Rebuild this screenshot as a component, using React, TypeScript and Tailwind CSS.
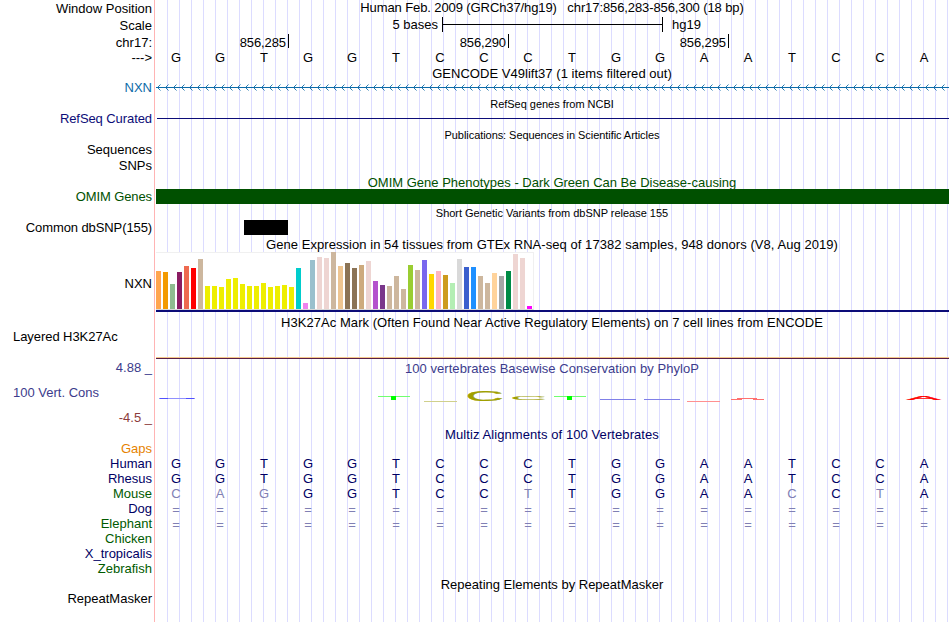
import React from 'react';

const sequence = 'GGTGGTCCCTGGAATCCA';

const alignments = [
  { name: 'Human', bases: 'GGTGGTCCCTGGAATCCA', color: 'text-[#000064]' },
  { name: 'Rhesus', bases: 'GGTGGTCCCTGGAATCCA', color: 'text-[#000064]' },
  { name: 'Mouse', bases: 'CAGGGTCCTTGGAACCTA', color: 'text-[#005a00]' },
  { name: 'Dog', bases: '==================', color: 'text-[#000064]' },
  { name: 'Elephant', bases: '==================', color: 'text-[#005a00]' },
  { name: 'Chicken', bases: '', color: 'text-[#005a00]' },
  { name: 'X_tropicalis', bases: '', color: 'text-[#000064]' },
  { name: 'Zebrafish', bases: '', color: 'text-[#005a00]' },
];

// [bar height, tissue color]
const tissues: [number, string][] = [
  [38, '#ffa54f'], [37, '#f39a00'], [25, '#8fbc8f'], [37, '#8b1c62'], [43, '#ee6a50'], [41, '#ff0000'],
  [50, '#cdb79e'], [23, '#eeee00'], [23, '#eeee00'], [22, '#eeee00'], [30, '#eeee00'], [31, '#eeee00'],
  [25, '#eeee00'], [23, '#eeee00'], [23, '#eeee00'], [26, '#eeee00'], [22, '#eeee00'], [23, '#eeee00'],
  [24, '#eeee00'], [22, '#eeee00'], [41, '#00cdcd'], [6, '#ee82ee'], [49, '#9ac0cd'], [52, '#eed5d2'],
  [51, '#eed5d2'], [57, '#cdb79e'], [43, '#eec591'], [46, '#8b7355'], [41, '#8b7355'], [44, '#cdaa7d'],
  [48, '#eed5d2'], [28, '#b452cd'], [24, '#7a378b'], [23, '#cdb79e'], [33, '#cdb79e'], [20, '#cdb79e'],
  [44, '#9acd32'], [39, '#cdb79e'], [49, '#7a67ee'], [35, '#ffd700'], [38, '#ffb6c1'], [34, '#cd9b1d'],
  [26, '#b4eeb4'], [50, '#d9d9d9'], [42, '#3a5fcd'], [42, '#1e90ff'], [33, '#cdb79e'], [26, '#cdb79e'],
  [36, '#ffd39b'], [33, '#a6a6a6'], [38, '#008b45'], [55, '#eed5d2'], [51, '#eed5d2'], [3, '#ff00ff'],
];

type RowProps = {
  label?: string;
  height: string;
  color?: string;
  labelClass?: string;
  children?: React.ReactNode;
};

function Row({ label, height, color = 'text-black', labelClass = '', children }: RowProps) {
  return (
    <div className={`flex shrink-0 ${height}`}>
      <div className={`flex w-[154px] shrink-0 items-center justify-end whitespace-pre pr-0.5 ${color} ${labelClass}`}>
        {label}
      </div>
      <div className="w-[795px] shrink-0">{children}</div>
    </div>
  );
}

type TitleProps = {
  height: string;
  color?: string;
  size?: string;
  className?: string;
  children?: React.ReactNode;
};

function Title({ height, color = 'text-black', size = 'text-[13px]', className = '', children }: TitleProps) {
  return (
    <div className={`ml-[155px] flex w-[794px] shrink-0 items-center justify-center whitespace-pre ${height} ${color} ${size} ${className}`}>
      <span>{children}</span>
    </div>
  );
}

function Bases({ bases, reference, className = '' }: { bases: string; reference?: string; className?: string }) {
  return (
    <div className={`grid h-full w-[792px] grid-cols-[repeat(18,44px)] items-center text-center ${className}`}>
      {bases.split('').map((b, i) => (
        <span
          key={i}
          className={!reference ? 'text-black' : b === reference[i] ? 'text-[#000064]' : 'text-[#8080b4]'}
        >
          {b}
        </span>
      ))}
    </div>
  );
}

function Coordinate({ value, width }: { value: string; width: string }) {
  return (
    <div className={`flex h-3.5 items-center justify-end border-r border-black pr-0.5 tracking-[-0.1px] ${width}`}>
      <span className="pt-0.5">{value}</span>
    </div>
  );
}

function GeneArrows() {
  const arrows = Array.from({ length: 99 }, (_, i) => `M${6.5 + i * 8} 3.5l-3 3l3 3`).join('');
  return (
    <svg className="block" width="795" height="15" viewBox="0 0 795 15" fill="none" stroke="#0c6ba8">
      <path d="M2 6.5H795" shapeRendering="crispEdges" />
      <path d={arrows} strokeWidth="0.9" />
    </svg>
  );
}

// Letters are stretched to the base width and scaled to their PhyloP score
function Conservation() {
  return (
    <svg className="block" width="795" height="50" viewBox="154 377 795 50" fontFamily="Liberation Sans" fontSize="10">
      <g shapeRendering="crispEdges">
        <rect x="159" y="398" width="36" height="1" fill="#9090ff" />
        <rect x="160" y="398" width="8" height="1" fill="#5050ff" />
        <rect x="186" y="398" width="8" height="1" fill="#5050ff" />
        <rect x="378" y="396" width="32" height="1" fill="#70ff70" />
        <rect x="391" y="396" width="5" height="4" fill="#00ff00" />
        <rect x="554" y="396" width="32" height="1" fill="#70ff70" />
        <rect x="567" y="396" width="5" height="4" fill="#00ff00" />
        <rect x="424" y="401" width="33" height="1" fill="#d0d08c" />
        <rect x="600" y="399" width="36" height="1" fill="#8080e8" />
        <rect x="644" y="399" width="36" height="1" fill="#8080e8" />
        <rect x="687" y="401" width="33" height="1" fill="#ff9090" />
        <rect x="731" y="399" width="11" height="1" fill="#ff7070" />
        <rect x="737" y="398" width="20" height="1" fill="#ff7070" />
        <rect x="753" y="399" width="11" height="1" fill="#ff7070" />
      </g>
      <text transform="translate(465.5 400.8) scale(5.3 1.38)" fill="#a0a000" stroke="#a0a000" strokeWidth="0.15">C</text>
      <text transform="translate(510 400) scale(5.1 0.45)" fill="#a0a000" stroke="#a0a000" strokeWidth="0.15">C</text>
      <text transform="translate(907 400) scale(5 0.62)" fill="#ff0000" stroke="#ff0000" strokeWidth="0.4">A</text>
    </svg>
  );
}

export default function App() {
  return (
    <div className="relative h-[622px] w-[950px] overflow-hidden bg-white font-['Liberation_Sans',sans-serif] text-[13px] leading-[15px]">
      {/* Guidelines */}
      <div className="absolute inset-y-0 left-[154px] w-[795px] border-l border-[#ffb4b4]">
        <div className="ml-3 h-full bg-[repeating-linear-gradient(to_right,#dcdcff_0px,#dcdcff_1px,transparent_1px,transparent_12px)]" />
      </div>

      <div className="relative flex flex-col">
        {/* Ruler */}
        <Row label="Window Position" height="h-[17px]">
          <div className="ml-px whitespace-pre text-center tracking-[-0.1px]">Human Feb. 2009 (GRCh37/hg19)   chr17:856,283-856,300 (18 bp)</div>
        </Row>
        <Row label="Scale" height="h-[17px]">
          <div className="flex h-[15px] items-center">
            <span className="w-[288px] pr-1 text-right">5 bases</span>
            <div className="flex h-[15px] w-[221px] items-center border-x border-black">
              <div className="h-px w-full bg-black" />
            </div>
            <span className="pl-[9px]">hg19</span>
          </div>
        </Row>
        <Row label="chr17:" height="h-4">
          <div className="flex">
            <Coordinate value="856,285" width="w-[135px]" />
            <Coordinate value="856,290" width="w-[220px]" />
            <Coordinate value="856,295" width="w-[220px]" />
          </div>
        </Row>
        <Row label="--->" height="h-[15px]">
          <Bases bases={sequence} className="pb-[3px]" />
        </Row>

        <Title height="h-4" className="tracking-[0.03px]">GENCODE V49lift37 (1 items filtered out)</Title>
        <Row label="NXN" height="h-[15px]" color="text-[#0c6ba8]" labelClass="pb-0.5">
          <GeneArrows />
        </Row>

        <Title height="h-[15px]" size="text-[11px]" className="pt-0.5 tracking-[-0.03px]">RefSeq genes from NCBI</Title>
        <Row label="RefSeq Curated" height="h-4" color="text-[#0c0c78]" labelClass="pb-0.5 tracking-[-0.08px]">
          <div className="ml-[3px] mt-[7px] h-px bg-[#0c0c78]" />
        </Row>

        <Title height="h-[15px]" size="text-[11px]" className="pt-0.5 tracking-[-0.06px]">Publications: Sequences in Scientific Articles</Title>
        <Row label="Sequences" height="h-4" labelClass="pb-0.5" />
        <Row label="SNPs" height="h-4" labelClass="pb-0.5" />

        <Title height="h-[15px]" color="text-[#005000]" className="pt-0.5">OMIM Gene Phenotypes - Dark Green Can Be Disease-causing</Title>
        <Row label="OMIM Genes" height="h-[15px]" color="text-[#005000]" labelClass="tracking-[-0.1px]">
          <div className="ml-0.5 h-full bg-[#005000]" />
        </Row>

        <Title height="h-4" size="text-[11px]" className="pt-0.5 tracking-[-0.02px]">Short Genetic Variants from dbSNP release 155</Title>
        <Row label="Common dbSNP(155)" height="h-[15px]" labelClass="tracking-[-0.1px]">
          <div className="ml-[90px] h-full w-11 bg-black" />
        </Row>

        {/* GTEx expression */}
        <Title height="h-[17px]" className="pt-0.5 tracking-[0.05px]">Gene Expression in 54 tissues from GTEx RNA-seq of 17382 samples, 948 donors (V8, Aug 2019)</Title>
        <Row label="NXN" height="h-[63px]">
          <div className="ml-0.5 flex h-[58px] w-[378px] items-end gap-0.5 border-b border-r border-t border-b-[#d8d8d8] border-r-[#f0f0f0] border-t-[#f0f0f0] bg-white">
            {tissues.map(([value, color], i) => (
              <div key={i} className="w-[5px] shrink-0" style={{ height: value, backgroundColor: color }} />
            ))}
          </div>
          <div className="ml-0.5 h-0.5 bg-[#0c0c78]" />
        </Row>

        {/* H3K27Ac */}
        <Title height="h-3.5" className="tracking-[0.05px]">H3K27Ac Mark (Often Found Near Active Regulatory Elements) on 7 cell lines from ENCODE</Title>
        <div className="flex h-7">
          <div className="w-[156px] pl-[13px] tracking-[-0.06px]">Layered H3K27Ac</div>
        </div>
        <div className="ml-[156px] h-0.5 w-[793px] border-b border-t border-b-[#5a1e46] border-t-[#f5c88c]" />

        {/* PhyloP */}
        <div className="flex h-[18px] text-[#3c3c8c]">
          <div className="w-[155px] pr-[3px] pt-px text-right">4.88 _</div>
          <div className="w-[794px] pt-0.5 text-center tracking-[0.04px]">100 vertebrates Basewise Conservation by PhyloP</div>
        </div>
        <div className="flex h-[50px]">
          <div className="flex w-[154px] flex-col text-[#3c3c8c]">
            <span className="pl-[13px] pt-2">100 Vert. Cons</span>
            <span className="pr-0.5 pt-2.5 text-right text-[#8c3c3c]">-4.5 _</span>
          </div>
          <Conservation />
        </div>

        {/* Multiz */}
        <Title height="h-[15px]" color="text-[#000064]" className="tracking-[0.08px]">Multiz Alignments of 100 Vertebrates</Title>
        <Row label="Gaps" height="h-3.5" color="text-[#e68200]" labelClass="pb-0.5" />
        {alignments.map((a) => (
          <Row key={a.name} label={a.name} height="h-[15px]" color={a.color}>
            <Bases bases={a.bases} reference={sequence} className={a.bases[0] === '=' ? 'pt-px' : ''} />
          </Row>
        ))}

        <Title height="h-[17px]">Repeating Elements by RepeatMasker</Title>
        <Row label="RepeatMasker" height="h-3.5" labelClass="pb-[3px]" />
      </div>
    </div>
  );
}
